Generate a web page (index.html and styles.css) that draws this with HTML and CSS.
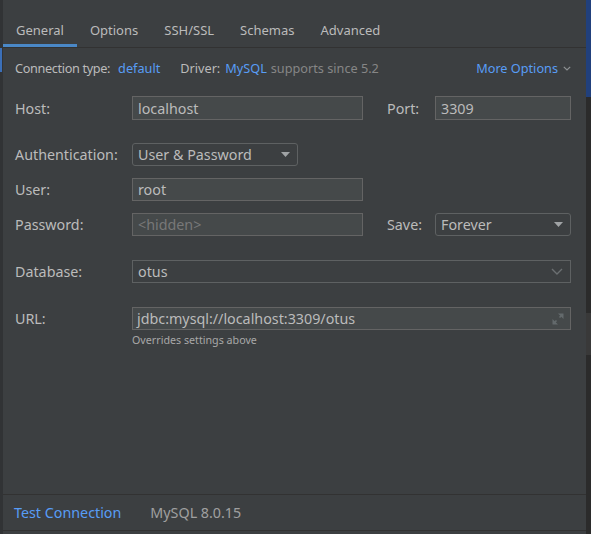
FILE: index.html
```html
<!DOCTYPE html>
<html>
<head>
<meta charset="utf-8">
<link rel="stylesheet" href="styles.css">
</head>
<body>
<div class="frame">
  <div class="edge-left"><div class="edge-left-top"></div><div class="edge-left-mark"></div></div>
  <div class="main">
    <div class="tabs">
      <div class="tab active">General</div>
      <div class="tab">Options</div>
      <div class="tab">SSH/SSL</div>
      <div class="tab">Schemas</div>
      <div class="tab">Advanced</div>
    </div>
    <div class="content">
      <div class="conn-row">
        <span class="label conn-label">Connection type:</span>
        <span class="link">default</span>
        <span class="label driver">Driver:</span>
        <span class="link">MySQL</span>
        <span class="muted">supports since 5.2</span>
        <span class="more link">More Options
          <svg class="chev-small" width="8" height="5" viewBox="0 0 8 5"><path d="M0.8 0.8 L4 4 L7.2 0.8" stroke="#8d9193" stroke-width="1.2" fill="none"/></svg>
        </span>
      </div>

      <div class="row row-host">
        <span class="flabel">Host:</span>
        <div class="input w-main tall">localhost</div>
        <span class="flabel-side">Port:</span>
        <div class="input w-side tall">3309</div>
      </div>

      <div class="row row-auth">
        <span class="flabel">Authentication:</span>
        <div class="select w-auth">
          <span>User &amp; Password</span>
          <svg width="9" height="5" viewBox="0 0 9 5"><path d="M0 0 H9 L4.5 5 Z" fill="#a0a3a5"/></svg>
        </div>
      </div>

      <div class="row row-user">
        <span class="flabel">User:</span>
        <div class="input w-main">root</div>
      </div>

      <div class="row row-pass">
        <span class="flabel">Password:</span>
        <div class="input w-main placeholder">&lt;hidden&gt;</div>
        <span class="flabel-side">Save:</span>
        <div class="select w-side">
          <span>Forever</span>
          <svg width="9" height="5" viewBox="0 0 9 5"><path d="M0 0 H9 L4.5 5 Z" fill="#a0a3a5"/></svg>
        </div>
      </div>

      <div class="row row-db">
        <span class="flabel">Database:</span>
        <div class="combo w-full">
          <span>otus</span>
          <svg width="12" height="7" viewBox="0 0 12 7"><path d="M1 1 L6 6 L11 1" stroke="#6b6f71" stroke-width="1.4" fill="none"/></svg>
        </div>
      </div>

      <div class="row row-url">
        <span class="flabel">URL:</span>
        <div class="input w-full url">
          <span>jdbc:mysql://localhost:3309/otus</span>
          <svg width="12" height="12" viewBox="0 0 12 12"><path d="M6 0.5 H11.5 V6 Z M0.5 6 V11.5 H6 Z" fill="#646a6c"/><path d="M10.5 1.5 L7.5 4.5 M1.5 10.5 L4.5 7.5" stroke="#646a6c" stroke-width="1.6"/></svg>
        </div>
      </div>
      <div class="hint">Overrides settings above</div>
    </div>
    <div class="footer">
      <span class="link">Test Connection</span>
      <span class="version">MySQL 8.0.15</span>
    </div>
  </div>
  <div class="edge-right"><div class="edge-right-top"></div><div class="edge-right-gap"></div><div class="edge-right-mid"></div></div>
</div>
</body>
</html>
```

FILE: styles.css
```css
html, body {
  margin: 0;
  padding: 0;
  background: #2f3133;
}

body {
  font-family: "Noto Sans", "Open Sans", sans-serif;
  font-size: 13px;
  color: #bbbbbb;
}

.frame {
  display: flex;
  width: 591px;
  height: 534px;
  overflow: hidden;
}

.edge-left {
  width: 3px;
  background: #313335;
  display: flex;
  flex-direction: column;
}

.edge-left-top {
  height: 48px;
}

.edge-left-mark {
  width: 2px;
  height: 24px;
  background: #3b6fb8;
}

.edge-right {
  width: 5px;
  background: #2b2b2b;
  display: flex;
  flex-direction: column;
}

.edge-right-top {
  height: 97px;
  background: #21407c;
}

.edge-right-gap {
  height: 216px;
}

.edge-right-mid {
  height: 42px;
  background: #393939;
}

.main {
  flex: 1;
  display: flex;
  flex-direction: column;
  background: #3c3f41;
}

.tabs {
  display: flex;
  height: 47px;
  border-bottom: 1px solid #323232;
}

.tab {
  padding: 13px 13px 0;
  display: flex;
  align-items: center;
  color: #bbbbbb;
}

.tab.active {
  box-shadow: inset 0 -3px 0 #4a88c7;
}

.content {
  flex: 1;
  padding: 0 15px 0 12px;
  display: flex;
  flex-direction: column;
}

.conn-row {
  height: 40px;
  display: flex;
  align-items: center;
  white-space: nowrap;
  font-size: 12.7px;
}

.link {
  color: #589df6;
}

.label {
  color: #bbbbbb;
  margin-right: 8px;
}

.conn-label {
  letter-spacing: -0.35px;
}

.conn-row .link {
  margin-right: 4px;
}

.driver {
  margin-left: 16px;
  margin-right: 5px;
}

.muted {
  color: #868686;
}

.more {
  margin-left: auto;
  display: flex;
  align-items: center;
  gap: 5px;
}

.conn-row .more {
  margin-right: 0;
}

.row {
  display: flex;
  align-items: center;
  font-size: 14.3px;
}

.row-host { margin-top: 8px; }
.row-auth { margin-top: 23px; }
.row-user { margin-top: 12px; }
.row-pass { margin-top: 12px; }
.row-db { margin-top: 24px; }
.row-url { margin-top: 24px; }

.flabel {
  width: 117px;
  flex: none;
}

.flabel-side {
  width: 48px;
  margin-left: 24px;
  flex: none;
}

.input, .select, .combo {
  box-sizing: border-box;
  height: 23px;
  display: flex;
  align-items: center;
  padding: 0 5px;
  white-space: nowrap;
}

.input {
  background: #45494a;
  border: 1px solid #646464;
  color: #bbbbbb;
}

.input.tall {
  height: 24px;
}

.placeholder {
  color: #787878;
}

.select {
  background: #3c3f41;
  border: 1px solid #5e6162;
  border-radius: 3px;
  justify-content: space-between;
  padding-right: 7px;
}

.combo {
  background: #3c3f41;
  border: 1px solid #5e6162;
  justify-content: space-between;
  padding-right: 7px;
}

.url {
  justify-content: space-between;
  padding-left: 4px;
  padding-right: 6px;
}

.w-main { width: 231px; }
.w-side { width: 136px; }
.w-auth { width: 166px; }
.w-full { flex: 1; }

.hint {
  margin-top: 3px;
  margin-left: 117px;
  font-size: 10.7px;
  color: #a8a8a8;
}

.footer {
  height: 35px;
  border-top: 1px solid #323232;
  border-bottom: 1px solid #323232;
  margin-bottom: 3px;
  display: flex;
  align-items: center;
  padding-left: 11px;
  gap: 29px;
  font-size: 14.3px;
}

.version {
  color: #a0a0a0;
}
```
